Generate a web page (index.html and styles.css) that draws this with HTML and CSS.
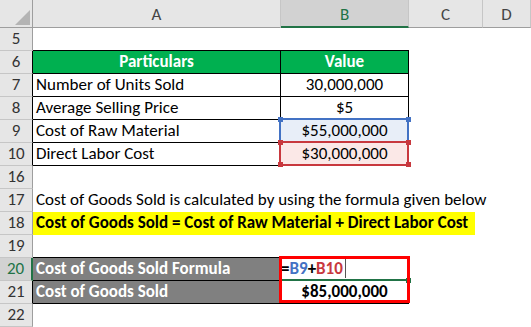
FILE: index.html
```html
<!DOCTYPE html>
<html>
<head>
<meta charset="utf-8">
<title>Cost of Goods Sold</title>
<link rel="stylesheet" href="styles.css">
</head>
<body>
<div class="sheet">
  <div class="corner"><svg width="15" height="15" viewBox="0 0 15 15"><polygon points="15,0 15,15 0,15" fill="#b4b4b4"/></svg></div>
  <div class="ch">A</div>
  <div class="ch sel">B</div>
  <div class="ch">C</div>
  <div class="ch">D</div>

  <div class="rh">5</div>
  <div class="c top"></div><div class="c top"></div><div class="c"></div><div class="c"></div>

  <div class="rh edge">6</div>
  <div class="c t head">Particulars</div><div class="c t head">Value</div><div class="c"></div><div class="c"></div>

  <div class="rh edge">7</div>
  <div class="c t">Number of Units Sold</div><div class="c t num">30,000,000</div><div class="c"></div><div class="c"></div>

  <div class="rh edge">8</div>
  <div class="c t">Average Selling Price</div><div class="c t num">$5</div><div class="c"></div><div class="c"></div>

  <div class="rh edge">9</div>
  <div class="c t">Cost of Raw Material</div>
  <div class="c t num fill-blue"><span class="ref blue"><i class="sq tl"></i><i class="sq tr"></i></span>$55,000,000</div>
  <div class="c"></div><div class="c"></div>

  <div class="rh edge">10</div>
  <div class="c t">Direct Labor Cost</div>
  <div class="c t num fill-red"><span class="ref red"><i class="sq tl"></i><i class="sq tr"></i><i class="sq bl"></i><i class="sq br"></i></span>$30,000,000</div>
  <div class="c"></div><div class="c"></div>

  <div class="rh">16</div>
  <div class="c"></div><div class="c"></div><div class="c"></div><div class="c"></div>

  <div class="rh">17</div>
  <div class="c wide">Cost of Goods Sold is calculated by using the formula given below</div>

  <div class="rh">18</div>
  <div class="c wide flush"><span class="yellow">Cost of Goods Sold = Cost of Raw Material + Direct Labor Cost</span></div>

  <div class="rh">19</div>
  <div class="c top"></div><div class="c top"></div><div class="c"></div><div class="c"></div>

  <div class="rh sel">20</div>
  <div class="c t gray">Cost of Goods Sold Formula</div>
  <div class="c t formula"><span class="big"></span><span class="active"></span><span class="handle"></span><span class="eq">=</span><span class="rb">B9</span>+<span class="rr">B10</span><span class="caret"></span></div>
  <div class="c"></div><div class="c"></div>

  <div class="rh edge">21</div>
  <div class="c t gray">Cost of Goods Sold</div>
  <div class="c t num bold">$85,000,000</div>
  <div class="c"></div><div class="c"></div>

  <div class="rh">22</div>
  <div class="c"></div><div class="c"></div><div class="c"></div><div class="c"></div>
</div>
</body>
</html>
```

FILE: styles.css
```css
html, body {
  margin: 0;
  padding: 0;
  background: #fff;
}
body {
  font-family: Carlito, Calibri, Lato, "Liberation Sans", sans-serif;
  font-size: 17px;
}
.sheet {
  display: grid;
  grid-template-columns: 33px 248px 128px 74px 48px;
  grid-template-rows: 28px repeat(13, 23px);
  width: 531px;
  height: 327px;
  overflow: hidden;
}
.sheet > div {
  box-sizing: border-box;
}
.corner {
  background: #e6e6e6;
  border-right: 1px solid #9e9e9e;
  border-bottom: 1px solid #9e9e9e;
  display: flex;
  align-items: flex-end;
  justify-content: flex-end;
  padding: 0 2px 2px 0;
}
.corner svg { display: block; }
.ch {
  background: #e6e6e6;
  border-right: 1px solid #c6c6c6;
  border-bottom: 1px solid #9e9e9e;
  text-align: center;
  color: #444;
  line-height: 27px;
  padding-top: 1px;
}
.ch.sel {
  background: #d2d2d2;
  color: #217346;
  border-bottom: 2px solid #217346;
}
.rh {
  background: #e6e6e6;
  border-right: 1px solid #9e9e9e;
  border-bottom: 1px solid #c6c6c6;
  text-align: center;
  color: #333;
  line-height: 22px;
}
.rh.edge { border-right-color: #000; }
.rh.sel {
  background: #d2d2d2;
  color: #217346;
  border-right: 2px solid #217346;
}
.c {
  position: relative;
  line-height: 22px;
  padding: 0 3px;
  white-space: nowrap;
  color: #000;
}
.c.top { border-bottom: 1px solid #000; }
.c.t {
  border-right: 1px solid #000;
  border-bottom: 1px solid #000;
}
.head {
  background: #00b050;
  color: #fff;
  font-weight: bold;
  text-align: center;
}
.num { text-align: center; }
.bold { font-weight: bold; }
.gray {
  background: #808080;
  color: #fff;
  font-weight: bold;
}
.wide {
  grid-column: span 4;
}
.flush { padding: 0; }
.yellow {
  display: inline-block;
  box-sizing: border-box;
  width: 442px;
  height: 23px;
  padding-left: 3px;
  background: #ffff00;
  font-weight: bold;
}
.fill-blue { background: #e8eef8; }
.fill-red { background: #fbe8e7; }
.ref {
  position: absolute;
  left: -2px;
  top: -2px;
  width: 130px;
  height: 25px;
  box-sizing: border-box;
  border: 2px solid;
  z-index: 2;
}
.ref.blue { border-color: #4372c4; }
.ref.red { border-color: #c8383e; }
.sq {
  position: absolute;
  width: 5px;
  height: 5px;
}
.ref.blue .sq { background: #4372c4; }
.ref.red .sq { background: #c8383e; }
.sq.tl { left: -3px; top: -3px; }
.sq.tr { right: -4px; top: -3px; }
.sq.bl { left: -3px; bottom: -3px; }
.sq.br { right: -4px; bottom: -3px; }
.formula {
  padding: 0;
  font-weight: bold;
}
.rb { color: #4372c4; }
.rr { color: #c8383e; }
.caret {
  display: inline-block;
  width: 1px;
  height: 20px;
  margin-left: 2px;
  background: #555;
  vertical-align: -4px;
}
.big {
  position: absolute;
  left: -2px;
  top: -2px;
  width: 131px;
  height: 47px;
  box-sizing: border-box;
  border: 3px solid #ff0000;
  z-index: 3;
}
.active {
  position: absolute;
  left: 1px;
  width: 125px;
  bottom: -1px;
  height: 2px;
  background: #217346;
  z-index: 2;
}
.handle {
  position: absolute;
  left: 125px;
  top: 20px;
  width: 5px;
  height: 5px;
  background: #217346;
  z-index: 2;
}
```
